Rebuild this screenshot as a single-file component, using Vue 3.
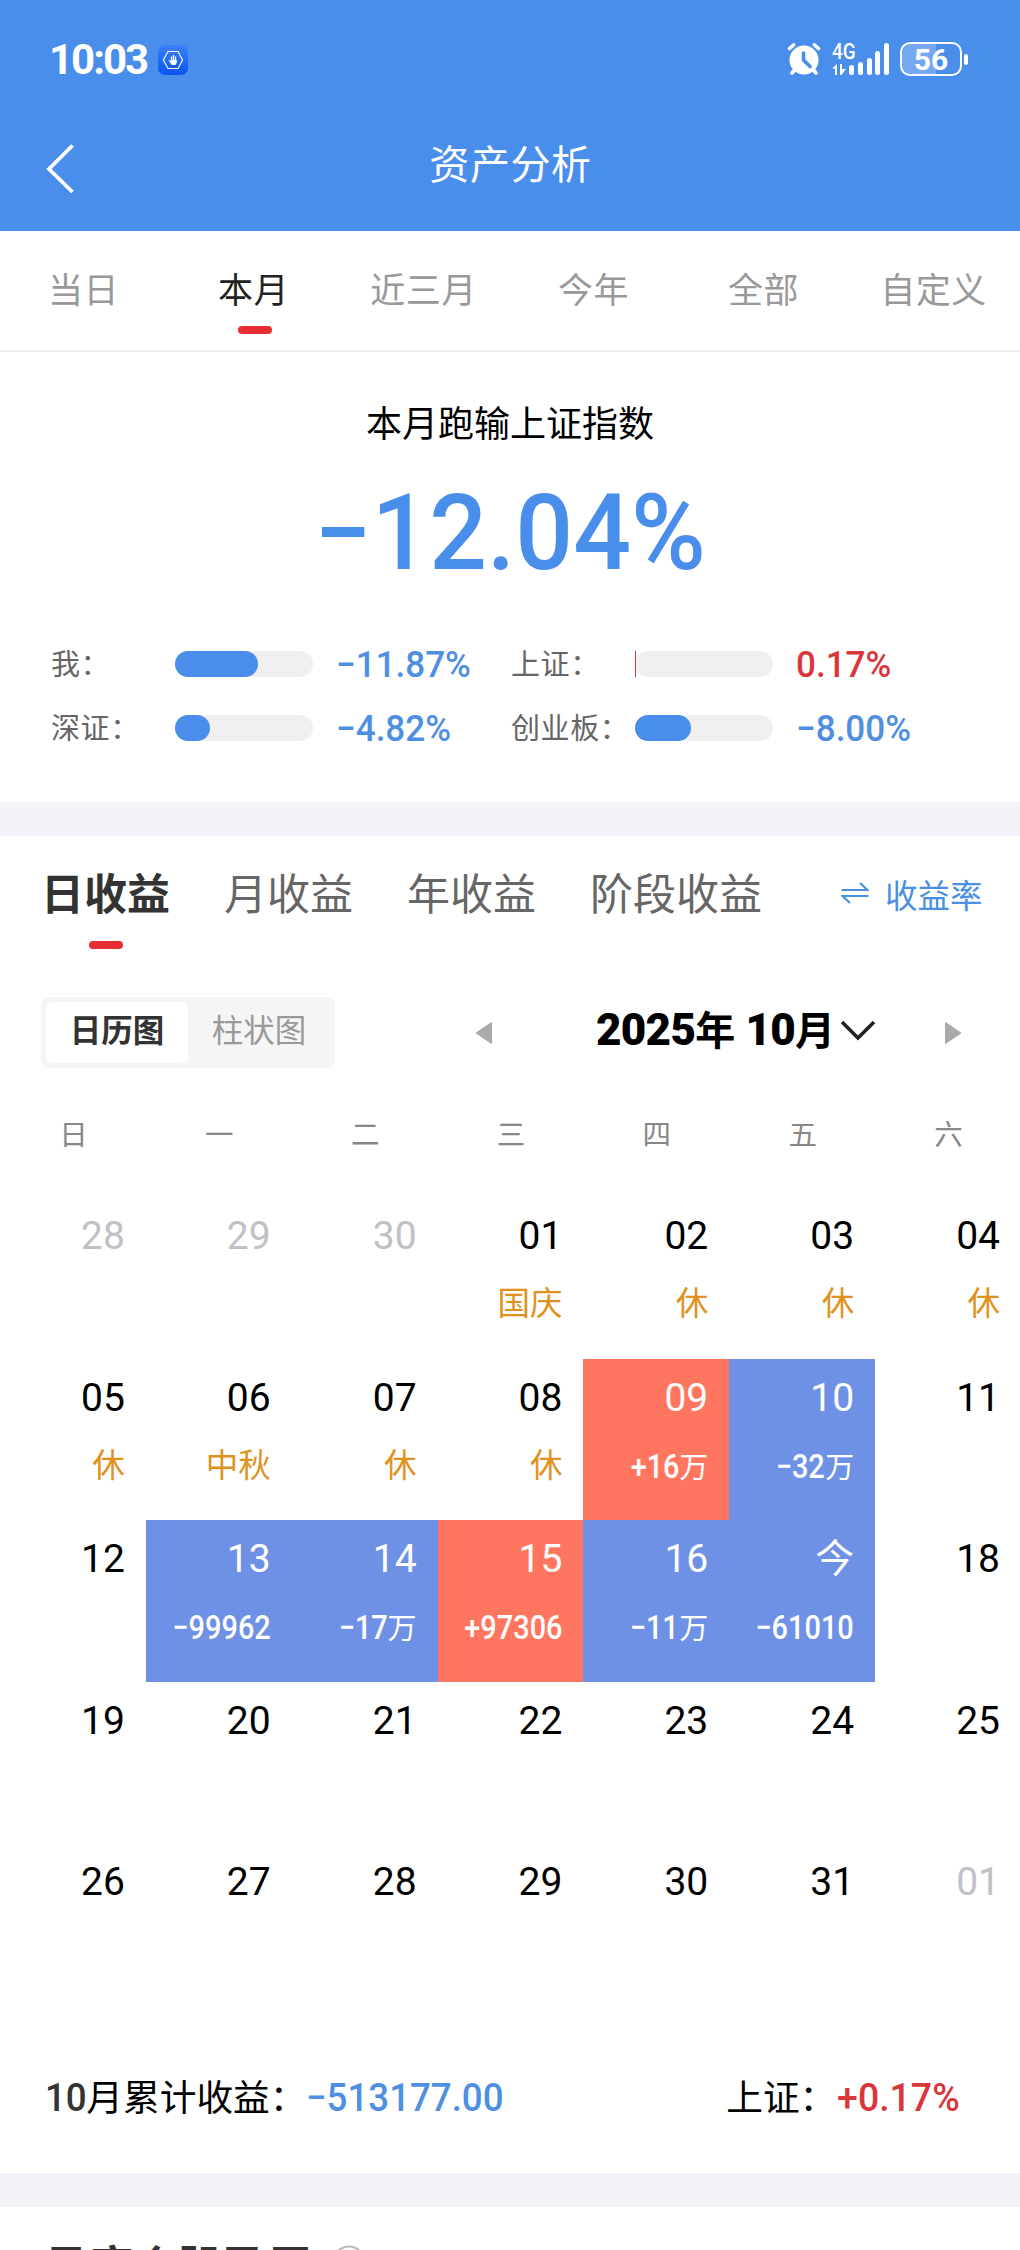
<template>
    <div class="page">
        <header class="header">
            <div class="status">
                <div class="status-left">
                    <span class="time">10:03</span>
                    <svg class="app-icon" viewBox="0 0 30 30">
                        <defs>
                            <linearGradient id="appBg" x1="0" y1="0" x2="0" y2="1">
                                <stop offset="0" stop-color="#3a82fb" />
                                <stop offset="1" stop-color="#0a55ee" />
                            </linearGradient>
                        </defs>
                        <rect width="30" height="30" rx="7" fill="url(#appBg)" />
                        <path d="M10 6.500h10l4.600 8.500-4.600 8.500H10L5.400 15z" fill="none" stroke="#fff" stroke-width="1.100" />
                        <path d="M13.500 16v-4.500M15.500 16v-6M17.500 16v-4.500" stroke="#fff" stroke-width="1.300" />
                        <path d="M10 14.500l2.800 1.500V15h6v2.500L17.500 20h-3.600z" fill="#fff" />
                    </svg>
                </div>
                <div class="status-right">
                    <svg class="alarm" viewBox="0 0 34 34">
                        <g stroke="#fff" stroke-linecap="round" stroke-width="3.600">
                            <path d="M2.500 6.500l4-3.500M31.500 6.500l-4-3.500M8 27.500l-3 3.500M26 27.500l3 3.500" />
                        </g>
                        <circle cx="17" cy="18" r="14.500" fill="#fff" />
                        <path d="M16.500 11v7l6.500 6.500" fill="none" stroke="#4a8eec" stroke-width="3.600" stroke-linecap="round" stroke-linejoin="round" />
                    </svg>
                    <div class="signal">
                        <div class="net">
                            <span>4G</span>
                            <svg viewBox="0 0 14 11" width="14" height="11">
                                <path d="M0 4.500L5 0v11H3V4.500zM8 0h2v5h4L9.500 11H8z" fill="#fff" />
                            </svg>
                        </div>
                        <i v-for="h in [10, 13, 17, 24, 32]" :key="h" :style="{ height: h + 'px' }"></i>
                    </div>
                    <div class="battery"><span>56</span></div>
                    <div class="battery-cap"></div>
                </div>
            </div>
            <div class="nav">
                <svg class="back" viewBox="0 0 30 54">
                    <path d="M26.500 3.500L3 27l23.500 23" fill="none" stroke="#fff" stroke-width="3.800" />
                </svg>
                <h1>资产分析</h1>
            </div>
        </header>

        <nav class="range">
            <div v-for="(t, i) in ranges" :key="t" :class="{ active: i === 1 }">{{ t }}</div>
        </nav>

        <section class="summary">
            <h2>本月跑输上证指数</h2>
            <div class="big"><span>−12.04%</span></div>
            <div class="compare">
                <div v-for="c in compares" :key="c.name" class="item">
                    <label>{{ c.name }}：</label>
                    <div class="bar">
                        <div :class="c.up ? 'up-bar' : 'down-bar'" :style="{ width: c.width + 'px' }"></div>
                    </div>
                    <span class="num" :class="c.up ? 'up' : 'down'">{{ c.value }}</span>
                </div>
            </div>
        </section>

        <div class="gap"></div>

        <section class="profit">
            <div class="tabs">
                <div class="tab active">日收益</div>
                <div class="tab">月收益</div>
                <div class="tab">年收益</div>
                <div class="tab">阶段收益</div>
                <div class="switch">
                    <svg viewBox="0 0 28 22">
                        <path d="M.5 8h26L19 1M27.500 14h-26L9 21" fill="none" stroke="#4a90e2" stroke-width="2.200" />
                    </svg>
                    <span>收益率</span>
                </div>
            </div>

            <div class="toolbar">
                <div class="segment">
                    <div class="on">日历图</div>
                    <div>柱状图</div>
                </div>
                <svg class="arrow prev" viewBox="0 0 18 24">
                    <path d="M16.500 1.500v21L1 12z" fill="#aaa" stroke="#aaa" stroke-linejoin="round" />
                </svg>
                <div class="month">
                    <div class="month-text"><b>2025</b>年<b class="m"> 10</b>月</div>
                    <svg viewBox="0 0 36 22">
                        <path d="M2 2l16 16L34 2" fill="none" stroke="#222" stroke-width="3.600" />
                    </svg>
                </div>
                <svg class="arrow" viewBox="0 0 18 24">
                    <path d="M1.500 1.500v21L17 12z" fill="#aaa" stroke="#aaa" stroke-linejoin="round" />
                </svg>
            </div>

            <div class="week">
                <div v-for="w in weeks" :key="w">{{ w }}</div>
            </div>
            <div class="calendar">
                <div v-for="(d, i) in days" :key="i" class="day" :class="d.type">
                    <div class="date">{{ d.date }}</div>
                    <div v-if="d.rest" class="rest">{{ d.rest }}</div>
                    <div v-if="d.value" class="value"><b>{{ d.value }}</b><span v-if="d.unit">{{ d.unit }}</span></div>
                </div>
            </div>

            <div class="total">
                <div class="total-item">
                    <b class="dark">10</b>月累计收益：<b class="down">−513177.00</b>
                </div>
                <div class="total-item right">上证：<b class="up">+0.17%</b></div>
            </div>
        </section>

        <div class="gap"></div>

        <section class="stocks">
            <h3>月度个股盈亏</h3>
            <svg viewBox="0 0 34 34">
                <circle cx="17" cy="17" r="15.500" fill="none" stroke="#bbb" stroke-width="2" />
            </svg>
        </section>
    </div>
</template>

<script setup>
const ranges = ['当日', '本月', '近三月', '今年', '全部', '自定义']

const compares = [
    { name: '我', value: '−11.87%', width: 83 },
    { name: '上证', value: '0.17%', width: 1, up: true },
    { name: '深证', value: '−4.82%', width: 35 },
    { name: '创业板', value: '−8.00%', width: 56 },
]

const weeks = ['日', '一', '二', '三', '四', '五', '六']

// 有休市或盈亏信息的日期
const info = {
    1: { rest: '国庆' },
    2: { rest: '休' },
    3: { rest: '休' },
    4: { rest: '休' },
    5: { rest: '休' },
    6: { rest: '中秋' },
    7: { rest: '休' },
    8: { rest: '休' },
    9: { value: '+16', unit: '万', type: 'gain' },
    10: { value: '−32', unit: '万', type: 'loss' },
    13: { value: '−99962', type: 'loss' },
    14: { value: '−17', unit: '万', type: 'loss' },
    15: { value: '+97306', type: 'gain' },
    16: { value: '−11', unit: '万', type: 'loss' },
    17: { date: '今', value: '−61010', type: 'loss' },
}

const days = [28, 29, 30].map(n => ({ date: n, type: 'other' }))
for (let n = 1; n <= 31; n++) {
    days.push({ date: String(n).padStart(2, '0'), ...info[n] })
}
days.push({ date: '01', type: 'other' })
</script>

<style>
body {
    background: #fff;
}
</style>

<style scoped>
.page {
    width: 1020px;
    height: 2250px;
    overflow: hidden;
    background: #fff;
    color: #000;
    font-family: Roboto, "Noto Sans CJK SC", sans-serif;
}

h1,
h2,
h3 {
    margin: 0;
    font-weight: 400;
}

.header {
    height: 231px;
    background: #4a8eec;
    color: #fff;
}

.status {
    display: flex;
    justify-content: space-between;
    height: 120px;
    padding: 0 52px 0 49px;
}

.status-left,
.status-right {
    display: flex;
    align-items: center;
}

.time {
    width: 109px;
    font-size: 42px;
    font-weight: 700;
    letter-spacing: -2px;
    line-height: 50px;
}

.app-icon {
    width: 30px;
    height: 30px;
}

.status-right {
    padding-bottom: 2px;
}

.alarm {
    width: 34px;
    height: 34px;
    margin-right: 11px;
}

.signal {
    display: flex;
    align-items: flex-end;
    height: 32px;
    margin-right: 11px;
}

.signal i {
    width: 5px;
    margin-left: 3.700px;
    border-radius: 3px;
    background: #fff;
}

.net {
    width: 14px;
    height: 32px;
    display: flex;
    flex-direction: column;
    justify-content: space-between;
    white-space: nowrap;
}

.net span {
    font-size: 22px;
    line-height: 18px;
    font-weight: 500;
    transform: scaleX(.86);
    transform-origin: left;
}

.battery {
    box-sizing: border-box;
    width: 62px;
    height: 34px;
    border: 2px solid #fff;
    border-radius: 10px;
    background: linear-gradient(90deg, #75a8f0 58%, transparent 58%);
    font-size: 30px;
    font-weight: 700;
    line-height: 31px;
    text-align: center;
}

.battery-cap {
    width: 4px;
    height: 11px;
    margin-left: 2px;
    border-radius: 2px;
    background: #fff;
}

.nav {
    display: flex;
    align-items: center;
    height: 98px;
    padding: 0 46px;
}

.back {
    width: 30px;
    height: 54px;
}

.nav h1 {
    flex: 1;
    padding: 0 29px 6px 0;
    font-size: 40px;
    letter-spacing: .6px;
    line-height: 48px;
    text-align: center;
}

.range {
    display: flex;
    box-sizing: border-box;
    height: 121px;
    border-bottom: 2px solid #f0f0f0;
}

.range div {
    display: flex;
    flex-direction: column;
    align-items: center;
    width: 170px;
    padding-top: 36px;
    color: #999;
    font-size: 35px;
    line-height: 50px;
    letter-spacing: .5px;
    text-indent: -3px;
}

.range .active {
    color: #222;
}

.active::after {
    content: "";
    width: 34px;
    height: 8px;
    border-radius: 4px;
    background: #e62e34;
}

.range .active::after {
    margin-top: 9px;
}

.summary {
    height: 450px;
    text-align: center;
}

.summary h2 {
    padding-top: 48px;
    font-size: 36px;
    line-height: 50px;
}

.big {
    height: 124px;
    margin-top: 21px;
    color: #4a8eec;
    font-size: 106px;
    font-weight: 500;
    line-height: 124px;
}

.big span {
    display: inline-block;
    transform: scaleX(.96);
}

.compare {
    display: grid;
    grid-template-columns: 460px 460px;
    grid-auto-rows: 64px;
    margin: 37px 0 0 51px;
}

.item {
    display: flex;
    align-items: center;
    height: 64px;
}

.item label {
    width: 124px;
    padding-bottom: 4px;
    color: #666;
    font-size: 29px;
    letter-spacing: .6px;
    text-align: left;
    white-space: nowrap;
}

.bar {
    width: 138px;
    height: 26px;
    margin-right: 23px;
    border-radius: 13px;
    background: #f0f0f0;
}

.bar div {
    height: 26px;
}

.down-bar {
    border-radius: 13px;
    background: #4a8eec;
}

.up-bar {
    background: #c8383c;
}

.num {
    font-size: 36.500px;
    font-weight: 500;
    transform: scaleX(.96);
    transform-origin: left;
}

.up {
    color: #d8363a;
}

.down {
    color: #4f8fe2;
}

.gap {
    height: 34px;
    background: #f2f3f8;
}

.profit {
    height: 1337px;
}

.tabs {
    display: flex;
    height: 161px;
    gap: 54px;
    padding-left: 41px;
}

.tab {
    display: flex;
    flex-direction: column;
    align-items: center;
    padding-top: 28px;
    color: #666;
    font-size: 43px;
    line-height: 62px;
    white-space: nowrap;
}

.tab.active {
    color: #333;
    font-weight: 700;
}

.tab.active::after {
    margin-top: 15px;
}

.switch {
    display: flex;
    align-items: center;
    height: 60px;
    margin: 27px 0 0 25px;
    color: #4a90e2;
    font-size: 32.500px;
    white-space: nowrap;
}

.switch svg {
    width: 28px;
    height: 22px;
    margin-right: 16px;
}

.toolbar {
    display: flex;
    align-items: center;
    height: 71px;
    padding-left: 41px;
}

.segment {
    display: flex;
    box-sizing: border-box;
    width: 294px;
    height: 71px;
    padding: 5px;
    border-radius: 8px;
    background: #f5f5f5;
}

.segment div {
    width: 142px;
    color: #999;
    font-size: 31.500px;
    line-height: 60px;
    text-align: center;
}

.segment .on {
    border-radius: 5px;
    background: #fff;
    color: #333;
    font-weight: 700;
}

.arrow {
    width: 18px;
    height: 24px;
}

.prev {
    margin: 0 103px 0 140px;
}

.month {
    display: flex;
    align-items: center;
    width: 348px;
    padding-bottom: 4px;
}

.month-text {
    width: 239px;
    font-size: 40px;
    font-weight: 700;
    line-height: 56px;
    white-space: nowrap;
}

.month-text b {
    font-size: 44px;
    letter-spacing: -.7px;
}

.month-text .m {
    white-space: pre;
}

.month svg {
    width: 36px;
    height: 22px;
    margin-left: 5px;
}

.week {
    display: grid;
    grid-template-columns: repeat(7, 1fr);
    width: 1021px;
    height: 129px;
    color: #888;
    font-size: 28.500px;
    line-height: 135px;
    text-align: center;
    text-indent: 1px;
}

.calendar {
    display: grid;
    grid-template-columns: repeat(7, 1fr);
    grid-auto-rows: 161.600px;
    width: 1021px;
}

.day {
    padding: 15px 21px 0 0;
    text-align: right;
}

.date {
    height: 48px;
    font-size: 39px;
    line-height: 48px;
}

.rest {
    padding-top: 22px;
    color: #e0921e;
    font-size: 32.500px;
    line-height: 44px;
}

.value {
    display: flex;
    justify-content: flex-end;
    align-items: baseline;
    padding-top: 22px;
    line-height: 44px;
}

.value b {
    font-size: 34px;
    font-weight: 500;
    transform: scaleX(.85);
    transform-origin: right;
}

.value span {
    font-size: 29px;
}

.other {
    color: #c0c0c6;
}

.gain {
    background: #ff7660;
    color: #fff;
}

.loss {
    background: #6f91e5;
    color: #fff;
}

.total {
    display: flex;
    justify-content: space-between;
    padding: 68px 60px 0 45px;
}

.total-item {
    display: flex;
    align-items: baseline;
    font-size: 36.700px;
    line-height: 50px;
}

.total-item b {
    font-size: 39px;
    font-weight: 500;
    transform: scaleX(.94);
    transform-origin: left;
}

.total-item b.up {
    margin-left: -4px;
    transform: scaleX(.96);
    transform-origin: right;
}

.total-item .dark {
    color: #333;
    margin-right: -3px;
}

.stocks {
    display: flex;
    align-items: flex-start;
    height: 43px;
    padding-left: 43px;
    overflow: hidden;
}

.stocks h3 {
    padding-top: 29px;
    color: #333;
    font-size: 45px;
    font-weight: 700;
    line-height: 66px;
}

.stocks svg {
    width: 34px;
    height: 34px;
    margin: 38px 0 0 19px;
}
</style>
